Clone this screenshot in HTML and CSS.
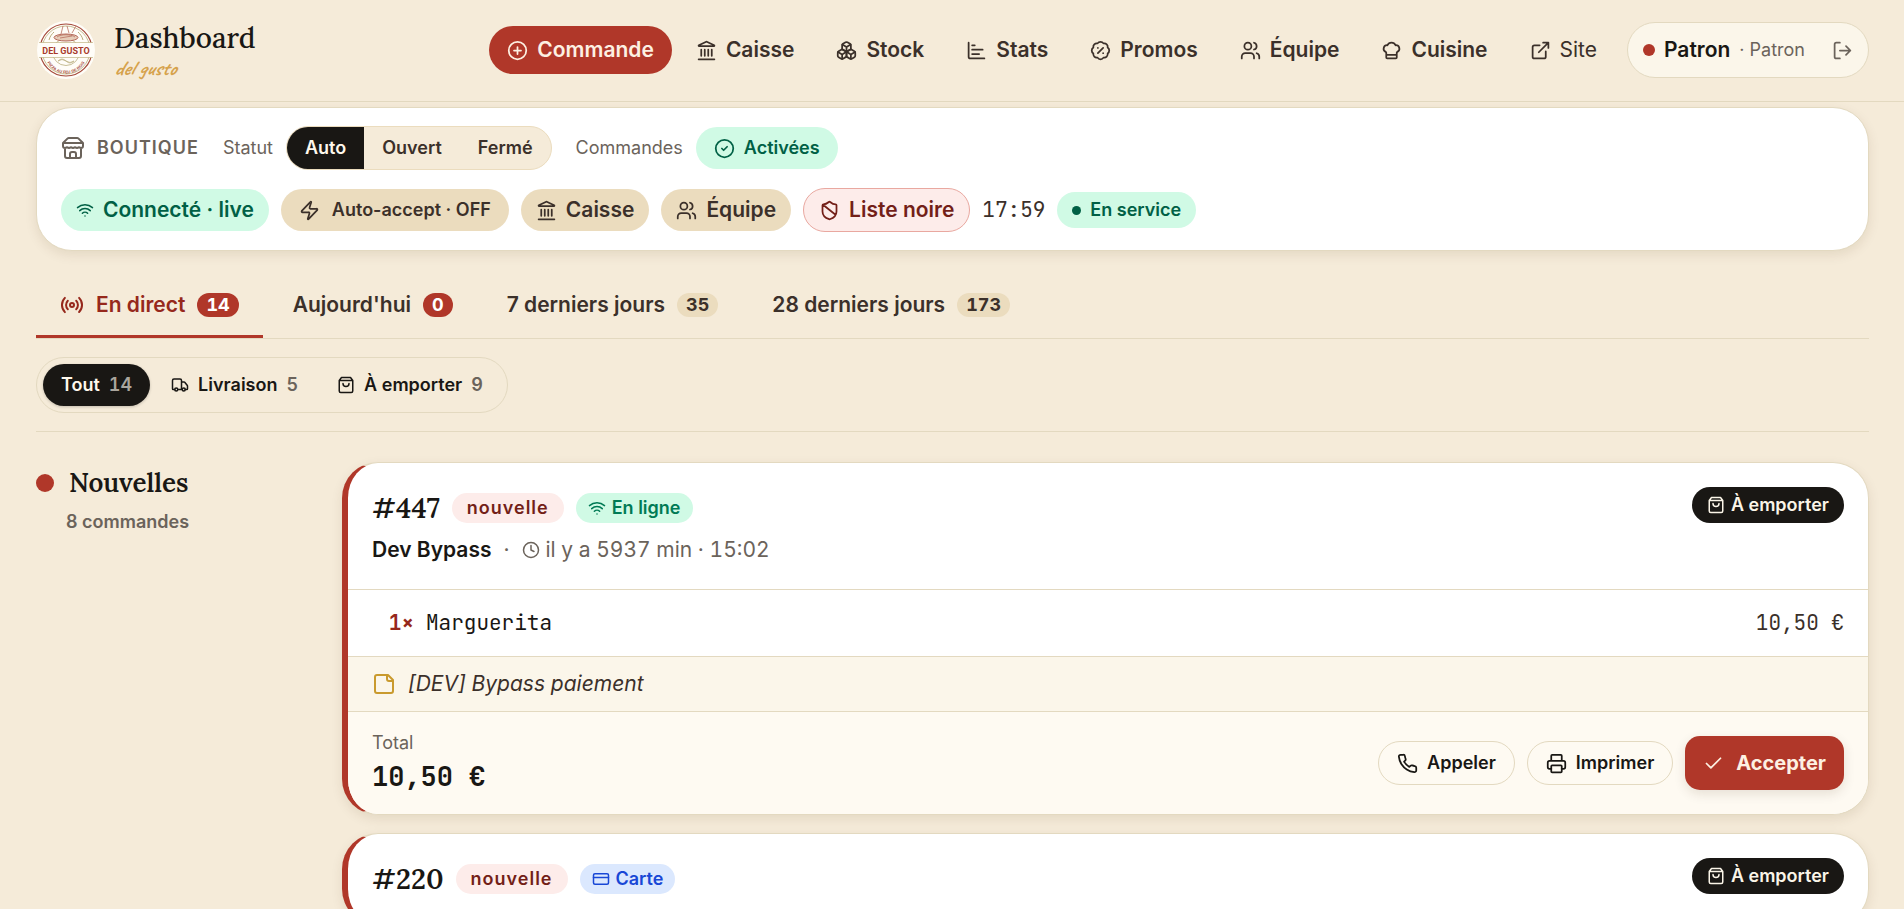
FILE: index.html
```html
<!DOCTYPE html>
<html lang="fr">
<head>
  <meta charset="UTF-8" />
  <meta name="viewport" content="width=device-width, initial-scale=1.0" />
  <title>Dashboard - Del Gusto</title>
  <link rel="stylesheet" href="styles.css">
</head>
<body>
  <svg class="sprite" aria-hidden="true">
    <symbol id="i-plus" viewBox="0 0 24 24"><circle cx="12" cy="12" r="10"/><path d="M8 12h8M12 8v8"/></symbol>
    <symbol id="i-bank" viewBox="0 0 24 24"><path d="M10 18v-7M14 18v-7M18 18v-7M6 18v-7M3 22h18"/><path d="M11.12 2.198a2 2 0 0 1 1.76.006l7.866 3.847c.476.233.31.949-.22.949H3.474c-.53 0-.695-.716-.22-.949z"/></symbol>
    <symbol id="i-boxes" viewBox="0 0 24 24"><path d="M2.97 12.92A2 2 0 0 0 2 14.63v3.24a2 2 0 0 0 .97 1.71l3 1.8a2 2 0 0 0 2.06 0L12 19v-5.5l-5-3-4.03 2.42Z"/><path d="m7 16.500-4.740-2.850M7 16.500l5-3M7 16.500v5.170"/><path d="M12 13.500V19l3.970 2.380a2 2 0 0 0 2.060 0l3-1.800a2 2 0 0 0 .970-1.710v-3.240a2 2 0 0 0-.970-1.710L17 10.500l-5 3Z"/><path d="m17 16.500-5-3M17 16.500l4.740-2.850M17 16.500v5.170"/><path d="M7.970 4.420A2 2 0 0 0 7 6.130v4.370l5 3 5-3V6.130a2 2 0 0 0-.970-1.710l-3-1.800a2 2 0 0 0-2.060 0l-3 1.800Z"/><path d="M12 8 7.260 5.150M12 8l4.740-2.850M12 13.500V8"/></symbol>
    <symbol id="i-chart" viewBox="0 0 24 24"><path d="M3 3v16a2 2 0 0 0 2 2h16M7 16h8M7 11h12M7 6h3"/></symbol>
    <symbol id="i-percent" viewBox="0 0 24 24"><path d="M3.850 8.620a4 4 0 0 1 4.780-4.770 4 4 0 0 1 6.740 0 4 4 0 0 1 4.780 4.780 4 4 0 0 1 0 6.740 4 4 0 0 1-4.770 4.780 4 4 0 0 1-6.750 0 4 4 0 0 1-4.780-4.770 4 4 0 0 1 0-6.760Z"/><path d="m15 9-6 6M9 9h.01M15 15h.01"/></symbol>
    <symbol id="i-users" viewBox="0 0 24 24"><path d="M16 21v-2a4 4 0 0 0-4-4H6a4 4 0 0 0-4 4v2"/><circle cx="9" cy="7" r="4"/><path d="M22 21v-2a4 4 0 0 0-3-3.870M16 3.130a4 4 0 0 1 0 7.750"/></symbol>
    <symbol id="i-chef" viewBox="0 0 24 24"><path d="M17 21a1 1 0 0 0 1-1v-5.350c0-.457.316-.844.727-1.041a4 4 0 0 0-2.134-7.589 5 5 0 0 0-9.186 0 4 4 0 0 0-2.134 7.588c.411.198.727.585.727 1.041V20a1 1 0 0 0 1 1ZM6 17h12"/></symbol>
    <symbol id="i-external" viewBox="0 0 24 24"><path d="M15 3h6v6M10 14 21 3M18 13v6a2 2 0 0 1-2 2H5a2 2 0 0 1-2-2V8a2 2 0 0 1 2-2h6"/></symbol>
    <symbol id="i-logout" viewBox="0 0 24 24"><path d="M9 21H5a2 2 0 0 1-2-2V5a2 2 0 0 1 2-2h4M16 17l5-5-5-5M21 12H9"/></symbol>
    <symbol id="i-store" viewBox="0 0 24 24"><path d="m2 7 4.410-4.410A2 2 0 0 1 7.830 2h8.340a2 2 0 0 1 1.420.590L22 7M4 12v8a2 2 0 0 0 2 2h12a2 2 0 0 0 2-2v-8M15 22v-4a2 2 0 0 0-2-2h-2a2 2 0 0 0-2 2v4M2 7h20M22 7v3a2 2 0 0 1-2 2 2.700 2.700 0 0 1-1.590-.630.700.700 0 0 0-.820 0A2.700 2.700 0 0 1 16 12a2.700 2.700 0 0 1-1.590-.630.700.700 0 0 0-.820 0A2.700 2.700 0 0 1 12 12a2.700 2.700 0 0 1-1.590-.630.700.700 0 0 0-.820 0A2.700 2.700 0 0 1 8 12a2.700 2.700 0 0 1-1.590-.630.700.700 0 0 0-.820 0A2.700 2.700 0 0 1 4 12a2 2 0 0 1-2-2V7"/></symbol>
    <symbol id="i-ok" viewBox="0 0 24 24"><circle cx="12" cy="12" r="10"/><path d="m9 12 2 2 4-4"/></symbol>
    <symbol id="i-wifi" viewBox="0 0 24 24"><path d="M12 20h.01M2 8.820a15 15 0 0 1 20 0M5 12.859a10 10 0 0 1 14 0M8.500 16.429a5 5 0 0 1 7 0"/></symbol>
    <symbol id="i-zap" viewBox="0 0 24 24"><path d="M4 14a1 1 0 0 1-.780-1.630l9.900-10.200a.5.5 0 0 1 .860.460l-1.920 6.020A1 1 0 0 0 13 10h7a1 1 0 0 1 .780 1.630l-9.900 10.200a.5.5 0 0 1-.860-.460l1.920-6.020A1 1 0 0 0 11 14z"/></symbol>
    <symbol id="i-shield" viewBox="0 0 24 24"><path d="M20 13c0 5-3.500 7.500-7.660 8.950a1 1 0 0 1-.670-.010C7.500 20.500 4 18 4 13V6a1 1 0 0 1 1-1c2 0 4.500-1.200 6.240-2.720a1.170 1.170 0 0 1 1.520 0C14.510 3.810 17 5 19 5a1 1 0 0 1 1 1zM4.240 5.210l14.320 11.310"/></symbol>
    <symbol id="i-radio" viewBox="0 0 24 24"><path d="M4.900 19.100C1 15.200 1 8.800 4.900 4.900M7.800 16.200c-2.300-2.300-2.300-6.100 0-8.500M16.200 7.800c2.300 2.300 2.300 6.100 0 8.500M19.100 4.900C23 8.800 23 15.100 19.100 19"/><circle cx="12" cy="12" r="2"/></symbol>
    <symbol id="i-truck" viewBox="0 0 24 24"><path d="M14 18V6a2 2 0 0 0-2-2H4a2 2 0 0 0-2 2v11a1 1 0 0 0 1 1h2M15 18H9M19 18h2a1 1 0 0 0 1-1v-3.650a1 1 0 0 0-.220-.624l-3.480-4.350A1 1 0 0 0 17.520 8H14"/><circle cx="17" cy="18" r="2"/><circle cx="7" cy="18" r="2"/></symbol>
    <symbol id="i-bag" viewBox="0 0 24 24"><path d="M6 2 3 6v14a2 2 0 0 0 2 2h14a2 2 0 0 0 2-2V6l-3-4ZM3 6h18M16 10a4 4 0 0 1-8 0"/></symbol>
    <symbol id="i-clock" viewBox="0 0 24 24"><circle cx="12" cy="12" r="10"/><path d="M12 6v6l4 2"/></symbol>
    <symbol id="i-note" viewBox="0 0 24 24"><path d="M16 3H5a2 2 0 0 0-2 2v14a2 2 0 0 0 2 2h14a2 2 0 0 0 2-2V8ZM15 3v4a2 2 0 0 0 2 2h4"/></symbol>
    <symbol id="i-phone" viewBox="0 0 24 24"><path d="M22 16.920v3a2 2 0 0 1-2.180 2 19.790 19.790 0 0 1-8.630-3.070 19.500 19.500 0 0 1-6-6 19.790 19.790 0 0 1-3.070-8.670A2 2 0 0 1 4.110 2h3a2 2 0 0 1 2 1.720 12.840 12.840 0 0 0 .700 2.810 2 2 0 0 1-.450 2.110L8.090 9.910a16 16 0 0 0 6 6l1.270-1.270a2 2 0 0 1 2.110-.450 12.840 12.840 0 0 0 2.810.700A2 2 0 0 1 22 16.920z"/></symbol>
    <symbol id="i-print" viewBox="0 0 24 24"><path d="M6 18H4a2 2 0 0 1-2-2v-5a2 2 0 0 1 2-2h16a2 2 0 0 1 2 2v5a2 2 0 0 1-2 2h-2M6 9V3a1 1 0 0 1 1-1h10a1 1 0 0 1 1 1v6"/><rect x="6" y="14" width="12" height="8" rx="1"/></symbol>
    <symbol id="i-check" viewBox="0 0 24 24"><path d="M20 6 9 17l-5-5"/></symbol>
    <symbol id="i-card" viewBox="0 0 24 24"><rect x="2" y="5" width="20" height="14" rx="2"/><path d="M2 10h20"/></symbol>
  </svg>

  <header class="topbar">
    <div class="brand">
      <svg class="logo" viewBox="0 0 60 60" role="img" aria-label="Del Gusto">
        <circle cx="30" cy="30" r="29" fill="#fffdf8"/>
        <circle cx="30" cy="30" r="26" fill="none" stroke="#a5493a" stroke-width="1.2"/>
        <circle cx="30" cy="30" r="24" fill="none" stroke="#b9ad7c" stroke-width=".8"/>
        <circle cx="30" cy="32" r="13.500" fill="none" stroke="#b9ad7c" stroke-width=".8"/>
        <ellipse cx="30" cy="17.500" rx="12" ry="3.500" fill="#e6cdb9" stroke="#a5493a" stroke-width=".8"/>
        <path d="M21 17c4-3 14-3 18 0M24 18l12-2M25 14l2-8M33 13l-2-7M36 13l4-7" fill="none" stroke="#b8705f" stroke-width=".8"/>
        <path d="M13 20c1-4 3-6 5-8M47 20c-1-4-3-6-5-8" fill="none" stroke="#b9ad7c"/>
        <path fill="#fffdf8" d="M2 23h56v14H2z"/>
        <path d="M3 22.500h54M3 37.500h54" stroke="#c8bd92" stroke-width=".8"/>
        <text class="logo-name" x="30" y="34" text-anchor="middle">DEL GUSTO</text>
        <path d="M22 41q4-3 8 0t8 0q-4 4-8 0t-8 0" fill="none" stroke="#b9ad7c" stroke-width=".7"/>
        <path id="arc" d="M8.500 32a21.500 21.500 0 0 0 43 0" fill="none"/>
        <text class="logo-arc"><textPath href="#arc" startOffset="50%" text-anchor="middle">PIZZA AU FEU DE BOIS</textPath></text>
      </svg>
      <div>
        <h1>Dashboard</h1>
        <p class="script">del gusto</p>
      </div>
    </div>

    <nav class="nav">
      <a class="nav-link primary" href="#commande"><svg class="icon"><use href="#i-plus"/></svg>Commande</a>
      <a class="nav-link" href="#caisse"><svg class="icon"><use href="#i-bank"/></svg>Caisse</a>
      <a class="nav-link" href="#stock"><svg class="icon"><use href="#i-boxes"/></svg>Stock</a>
      <a class="nav-link" href="#stats"><svg class="icon"><use href="#i-chart"/></svg>Stats</a>
      <a class="nav-link" href="#promos"><svg class="icon"><use href="#i-percent"/></svg>Promos</a>
      <a class="nav-link" href="#equipe"><svg class="icon"><use href="#i-users"/></svg>Équipe</a>
      <a class="nav-link" href="#cuisine"><svg class="icon"><use href="#i-chef"/></svg>Cuisine</a>
      <a class="nav-link light" href="#site"><svg class="icon"><use href="#i-external"/></svg>Site</a>
      <div class="user">
        <span class="dot"></span>
        <strong>Patron</strong>
        <span class="role">· Patron</span>
        <button class="logout" aria-label="Déconnexion"><svg class="icon"><use href="#i-logout"/></svg></button>
      </div>
    </nav>
  </header>

  <main>
    <section class="panel">
      <div class="row">
        <h2 class="panel-title"><svg class="icon large"><use href="#i-store"/></svg>Boutique</h2>
        <div class="field">
          <span class="field-label">Statut</span>
          <div class="segment" role="group" aria-label="Statut">
            <button class="active">Auto</button>
            <button>Ouvert</button>
            <button>Fermé</button>
          </div>
        </div>
        <div class="field">
          <span class="field-label">Commandes</span>
          <button class="pill wide green small-text"><svg class="icon"><use href="#i-ok"/></svg>Activées</button>
        </div>
      </div>
      <div class="row tight">
        <span class="pill green"><svg class="icon small"><use href="#i-wifi"/></svg>Connecté · live</span>
        <button class="pill wide sand auto small-text"><svg class="icon"><use href="#i-zap"/></svg>Auto-accept · OFF</button>
        <a class="pill sand" href="#caisse"><svg class="icon"><use href="#i-bank"/></svg>Caisse</a>
        <a class="pill sand" href="#equipe"><svg class="icon"><use href="#i-users"/></svg>Équipe</a>
        <a class="pill danger" href="#liste-noire"><svg class="icon"><use href="#i-shield"/></svg>Liste noire</a>
        <time class="clock">17:59</time>
        <span class="pill green service"><span class="dot"></span>En service</span>
      </div>
    </section>

    <div class="tabs" role="tablist">
      <button class="tab active" role="tab" aria-selected="true"><svg class="icon large"><use href="#i-radio"/></svg>En direct <span class="count red">14</span></button>
      <button class="tab" role="tab">Aujourd'hui <span class="count red">0</span></button>
      <button class="tab" role="tab">7 derniers jours <span class="count">35</span></button>
      <button class="tab" role="tab">28 derniers jours <span class="count">173</span></button>
    </div>

    <div class="filters">
      <div class="filter-group">
        <button class="filter active">Tout <span>14</span></button>
        <button class="filter"><svg class="icon small"><use href="#i-truck"/></svg>Livraison <span>5</span></button>
        <button class="filter"><svg class="icon small"><use href="#i-bag"/></svg>À emporter <span>9</span></button>
      </div>
    </div>

    <section class="board">
      <aside class="group-head">
        <h2><span class="dot"></span>Nouvelles</h2>
        <p>8 commandes</p>
      </aside>

      <div class="orders">
        <article class="order">
          <div class="order-head">
            <div>
              <div class="order-title">
                <h3>#447</h3>
                <span class="tag new">nouvelle</span>
                <span class="tag online"><svg class="icon small"><use href="#i-wifi"/></svg>En ligne</span>
              </div>
              <p class="order-meta"><strong>Dev Bypass</strong><span>·</span><span class="when"><svg class="icon small"><use href="#i-clock"/></svg>il y a 5937 min · 15:02</span></p>
            </div>
            <span class="mode"><svg class="icon small"><use href="#i-bag"/></svg>À emporter</span>
          </div>
          <div class="order-line">
            <span class="qty">1×</span>
            <span>Marguerita</span>
            <span class="price">10,50 €</span>
          </div>
          <div class="order-note"><svg class="icon large"><use href="#i-note"/></svg><em>[DEV] Bypass paiement</em></div>
          <div class="order-foot">
            <div>
              <p class="total-label">Total</p>
              <p class="total">10,50 €</p>
            </div>
            <div class="actions">
              <button class="btn"><svg class="icon"><use href="#i-phone"/></svg>Appeler</button>
              <button class="btn"><svg class="icon"><use href="#i-print"/></svg>Imprimer</button>
              <button class="btn accept"><svg class="icon"><use href="#i-check"/></svg>Accepter</button>
            </div>
          </div>
        </article>

        <article class="order">
          <div class="order-head">
            <div>
              <div class="order-title">
                <h3>#220</h3>
                <span class="tag new">nouvelle</span>
                <span class="tag card"><svg class="icon small"><use href="#i-card"/></svg>Carte</span>
              </div>
            </div>
            <span class="mode"><svg class="icon small"><use href="#i-bag"/></svg>À emporter</span>
          </div>
        </article>
      </div>
    </section>
  </main>
</body>
</html>
```
FILE: styles.css
```css
:root {
  --bg: #f5ebd9;
  --cream: #fbf6ea;
  --sand: #ebdcbe;
  --line: #e3d9c0;
  --ink: #191714;
  --text: #3b302a;
  --muted: #6b635b;
  --red: #b03729;
  --dark-red: #731f18;
  --mint: #d0fae5;
  --green: #006045;
  --serif: "Lora", "Liberation Serif", serif;
  --mono: "JetBrains Mono", "DejaVu Sans Mono", monospace;
}

* {
  box-sizing: border-box;
}

html, body {
  height: 100%;
}

body {
  margin: 0;
  overflow: hidden;
  background: var(--bg);
  color: var(--ink);
  font-family: Inter, "Liberation Sans", sans-serif;
  font-size: 21px;
  line-height: 30px;
}

h1, h2, h3, p {
  margin: 0;
}

a {
  color: inherit;
  text-decoration: none;
}

button {
  margin: 0;
  padding: 0;
  border: 0;
  background: none;
  color: inherit;
  font: inherit;
  cursor: pointer;
}

strong {
  font-weight: 600;
}

.sprite {
  display: none;
}

.icon {
  flex: none;
  width: 21px;
  height: 21px;
  fill: none;
  stroke: currentColor;
  stroke-width: 2;
  stroke-linecap: round;
  stroke-linejoin: round;
}
.icon.small {
  width: 18px;
  height: 18px;
}
.icon.large {
  width: 24px;
  height: 24px;
}

.dot {
  flex: none;
  width: 12px;
  height: 12px;
  border-radius: 50%;
  background: var(--red);
}

/* top bar */
.topbar {
  display: flex;
  align-items: center;
  justify-content: space-between;
  height: 102px;
  padding: 0 35px 1px 36px;
  border-bottom: 1px solid var(--line);
}

.brand {
  display: flex;
  align-items: center;
  gap: 18px;
}
.logo {
  width: 60px;
  height: 60px;
}
.logo-name {
  font: bold 9px Roboto, "Liberation Sans", sans-serif;
  fill: #a83a2c;
}
.logo-arc {
  font: bold 4px "Liberation Sans", sans-serif;
  fill: #a5493a;
}
h1 {
  font-family: var(--serif);
  font-size: 28px;
  font-weight: 500;
  line-height: 36px;
}
.script {
  font-family: "Yellowtail", "Caveat", "Liberation Serif", serif;
  font-size: 21px;
  font-weight: 700;
  font-style: italic;
  line-height: 24px;
  color: #d6a24c;
}

.nav {
  display: flex;
  align-items: center;
  gap: 6px;
  color: var(--text);
}
.nav-link {
  display: flex;
  align-items: center;
  gap: 9px;
  height: 48px;
  padding: 0 18px;
  border-radius: 24px;
  font-weight: 600;
}
.nav-link.primary {
  background: var(--red);
  color: #fdf0e2;
}
.nav-link.light {
  font-weight: 400;
}

.user {
  display: flex;
  align-items: center;
  gap: 9px;
  height: 56px;
  margin-left: 6px;
  padding: 0 15px;
  border: 1px solid var(--line);
  border-radius: 28px;
  background: var(--cream);
  color: var(--ink);
}
.role {
  font-size: 18px;
  color: var(--muted);
}
.logout {
  display: flex;
  margin-left: 18px;
  color: var(--muted);
}

main {
  padding: 5px 35px 36px 36px;
}

/* shop panel */
.panel {
  display: flex;
  flex-direction: column;
  gap: 18px;
  padding: 18px 24px;
  border: 1px solid var(--line);
  border-radius: 36px;
  background: #fff;
  box-shadow: 0 4px 12px rgba(80, 50, 10, 0.1);
}
.row {
  display: flex;
  align-items: center;
  gap: 24px;
  min-height: 44px;
}
.row.tight {
  gap: 12px;
}
.panel-title {
  display: flex;
  align-items: center;
  gap: 12px;
  font-size: 18px;
  font-weight: 600;
  letter-spacing: 1px;
  text-transform: uppercase;
  color: var(--muted);
}
.field {
  display: flex;
  align-items: center;
  gap: 13px;
}
.field-label {
  font-size: 18px;
  color: var(--muted);
}

.segment {
  display: flex;
  height: 44px;
  border: 1px solid var(--sand);
  border-radius: 22px;
  overflow: hidden;
  background: var(--bg);
}
.segment button {
  padding: 0 18px;
  font-size: 18px;
  font-weight: 600;
  color: var(--text);
}
.segment .active {
  background: var(--ink);
  color: #fff8ec;
}

.pill {
  display: inline-flex;
  align-items: center;
  gap: 9px;
  height: 42px;
  padding: 0 15px;
  border-radius: 22px;
  font-weight: 600;
}
.pill.wide {
  padding: 0 18px;
}
.pill.auto {
  gap: 12px;
}
.pill.small-text {
  font-size: 18px;
}
.pill.green {
  background: var(--mint);
  color: var(--green);
}
.pill.sand {
  background: var(--sand);
  color: var(--text);
}
.pill.danger {
  height: 44px;
  border: 1px solid #e9a8a0;
  background: #fdecea;
  color: var(--dark-red);
}
.pill.service {
  height: 36px;
  font-size: 18px;
}
.service .dot {
  width: 9px;
  height: 9px;
  background: var(--green);
}
.clock {
  font-family: var(--mono);
  color: var(--text);
}

/* tabs */
.tabs {
  display: flex;
  gap: 6px;
  margin-top: 24px;
  border-bottom: 1px solid var(--line);
}
.tab {
  display: flex;
  align-items: center;
  gap: 12px;
  height: 63px;
  padding: 0 24px;
  border-bottom: 3px solid transparent;
  color: var(--text);
  font-weight: 600;
}
.tab.active {
  border-color: var(--red);
  color: #96281c;
}
.count {
  height: 24px;
  padding: 0 9px;
  border-radius: 12px;
  background: var(--sand);
  font-size: 18px;
  font-weight: 700;
  line-height: 24px;
  font-variant-numeric: tabular-nums;
}
.count.red {
  background: var(--red);
  color: #fff;
}

/* filters */
.filters {
  display: flex;
  padding: 18px 0;
  border-bottom: 1px solid var(--line);
}
.filter-group {
  display: flex;
  gap: 3px;
  padding: 6px;
  border: 1px solid var(--line);
  border-radius: 28px;
}
.filter {
  display: flex;
  align-items: center;
  gap: 9px;
  height: 42px;
  padding: 0 18px;
  border-radius: 21px;
  font-size: 18px;
  font-weight: 600;
}
.filter span {
  color: var(--muted);
  font-variant-numeric: tabular-nums;
}
.filter.active {
  background: var(--ink);
  color: #fff8ec;
  box-shadow: 0 1px 3px rgba(0, 0, 0, 0.2);
}
.filter.active span {
  color: #aaa59d;
}

/* order board */
.board {
  display: grid;
  grid-template-columns: 270px 1fr;
  gap: 36px;
  padding-top: 30px;
}
.group-head h2 {
  display: flex;
  align-items: center;
  gap: 15px;
  font-family: var(--serif);
  font-size: 26px;
  font-weight: 600;
  line-height: 42px;
}
.group-head .dot {
  width: 18px;
  height: 18px;
}
.group-head p {
  padding-left: 30px;
  font-size: 18px;
  font-weight: 600;
  line-height: 36px;
  color: var(--muted);
}

.orders {
  display: flex;
  flex-direction: column;
  gap: 18px;
}
.order {
  border: 1px solid var(--line);
  border-left: 6px solid var(--red);
  border-radius: 36px;
  overflow: hidden;
  background: #fff;
  box-shadow: 0 4px 12px rgba(80, 50, 10, 0.1);
}
.order-head {
  display: flex;
  align-items: flex-start;
  justify-content: space-between;
  padding: 24px;
}
.order-title {
  display: flex;
  align-items: center;
  gap: 12px;
  height: 42px;
}
h3 {
  font-family: var(--serif);
  font-size: 28px;
  font-weight: 600;
}
.tag {
  display: inline-flex;
  align-items: center;
  gap: 6px;
  height: 30px;
  padding: 0 12px;
  border-radius: 15px;
  font-size: 18px;
  font-weight: 600;
}
.tag.new {
  padding: 0 15px;
  background: #fdecea;
  color: var(--dark-red);
  letter-spacing: 1px;
}
.tag.online {
  background: var(--mint);
  color: #007a55;
}
.tag.card {
  background: #dbe8fe;
  color: #1847d6;
}
.order-meta {
  display: flex;
  align-items: center;
  gap: 12px;
  margin-top: 6px;
  color: var(--muted);
}
.order-meta strong {
  color: var(--ink);
}
.when {
  display: flex;
  align-items: center;
  gap: 6px;
  font-variant-numeric: tabular-nums;
}
.mode {
  display: inline-flex;
  align-items: center;
  gap: 6px;
  height: 36px;
  padding: 0 15px;
  border-radius: 18px;
  background: var(--ink);
  color: #fbf5e8;
  font-size: 18px;
  font-weight: 600;
}

.order-line {
  display: flex;
  gap: 12px;
  padding: 18px 24px;
  border-top: 1px solid var(--line);
  font-family: var(--mono);
}
.qty {
  width: 42px;
  text-align: right;
  font-weight: 700;
  color: #96281c;
}
.price {
  margin-left: auto;
  color: var(--text);
}

.order-note {
  display: flex;
  align-items: center;
  gap: 12px;
  padding: 12px 24px;
  border-top: 1px solid var(--line);
  background: var(--cream);
  color: var(--text);
}
.order-note .icon {
  color: #c99a2e;
}

.order-foot {
  display: flex;
  align-items: center;
  justify-content: space-between;
  padding: 18px 24px;
  border-top: 1px solid var(--line);
  background: #fefaf2;
}
.total-label {
  font-size: 18px;
  line-height: 26px;
  color: var(--muted);
}
.total {
  font-family: var(--mono);
  font-size: 27px;
  font-weight: 700;
  line-height: 40px;
}
.actions {
  display: flex;
  align-items: center;
  gap: 12px;
}
.btn {
  display: flex;
  align-items: center;
  gap: 9px;
  height: 44px;
  padding: 0 18px;
  border: 1px solid var(--line);
  border-radius: 22px;
  font-size: 18px;
  font-weight: 600;
}
.btn.accept {
  gap: 12px;
  height: 54px;
  border: 0;
  border-radius: 15px;
  background: var(--red);
  color: #fdf0e2;
  font-size: 20px;
  font-weight: 700;
  box-shadow: 0 4px 12px rgba(60, 30, 10, 0.12);
}
```
